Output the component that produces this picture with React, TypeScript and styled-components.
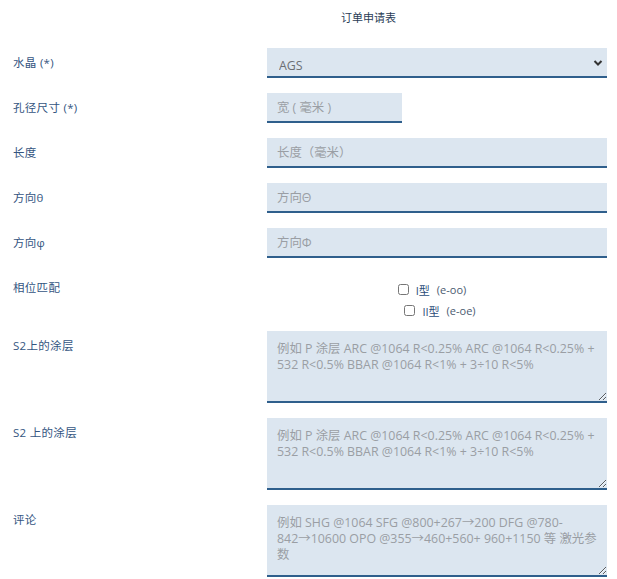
import styled, { createGlobalStyle } from 'styled-components'

const GlobalStyle = createGlobalStyle`
  html, body {
    margin: 0;
    padding: 0;
    background: #ffffff;
  }
  body {
    font-family: 'Open Sans', 'Noto Sans CJK SC', sans-serif;
  }
`

const Page = styled.div`
  width: 617px;
  padding: 10px 0 0 13px;
  box-sizing: border-box;
`

const Title = styled.h3`
  margin: 0 0 22px;
  padding-left: 328px;
  font-size: 11px;
  line-height: 16px;
  font-weight: 400;
  color: #2b3d57;
`

const Form = styled.form`
  display: grid;
  grid-template-columns: 254px 340px;
  row-gap: 15px;
  align-items: start;
`

const Label = styled.label`
  padding-top: 7px;
  font-size: 11.5px;
  line-height: 16px;
  letter-spacing: 0.3px;
  color: #34557f;
`

const fieldBase = `
  box-sizing: border-box;
  height: 30px;
  border: none;
  border-bottom: 2px solid #2f5f8c;
  background: #dce6f0;
  font-family: 'Open Sans', 'Noto Sans CJK SC', sans-serif;
  font-size: 12.4px;
  color: #555;
  padding: 0 10px;
  outline: none;
  &::placeholder {
    color: #9a9ea4;
  }
`

const TextInput = styled.input<{ $narrow?: boolean }>`
  ${fieldBase}
  width: ${(p) => (p.$narrow ? '135px' : '340px')};
`

const SelectWrap = styled.div`
  position: relative;
  width: 340px;
`

const Select = styled.select`
  ${fieldBase}
  width: 100%;
  appearance: none;
  padding: 8px 12px 0;
  line-height: 16px;
  color: #6b6f74;
`

const Chevron = styled.svg`
  position: absolute;
  right: 4px;
  top: 11px;
  width: 10px;
  height: 8px;
  pointer-events: none;
`

const TextArea = styled.textarea`
  ${fieldBase}
  width: 340px;
  height: 72px;
  padding: 10px 8px 10px 10px;
  line-height: 16px;
  resize: vertical;
  display: block;
`

const PhaseBox = styled.div`
  height: 43px;
  padding-top: 6px;
  box-sizing: border-box;
  display: flex;
  flex-direction: column;
  align-items: center;
`

const CheckRow = styled.label<{ $shift: number }>`
  display: flex;
  align-items: center;
  flex: none;
  height: 21px;
  margin-left: ${(p) => p.$shift}px;
  font-size: 11px;
  color: #2a4c78;
  input {
    width: 11px;
    height: 11px;
    margin: 0 7px 0 0;
  }
`

const Code = styled.span`
  margin-left: 7px;
  color: #4a5a70;
`

const coatingHint =
  '例如 P 涂层 ARC @1064 R<0.25% ARC @1064 R<0.25% + 532 R<0.5% BBAR @1064 R<1% + 3÷10 R<5%'

const App = () => {
  return (
    <Page>
      <GlobalStyle />
      <Title>订单申请表</Title>
      <Form>
        <Label>水晶 (*)</Label>
        <SelectWrap>
          <Select defaultValue="AGS">
            <option>AGS</option>
            <option>BBO</option>
            <option>LBO</option>
            <option>KTP</option>
          </Select>
          <Chevron viewBox="0 0 10 8">
            <path d="M1.5 2 L5 5.5 L8.5 2" fill="none" stroke="#333" strokeWidth="2" />
          </Chevron>
        </SelectWrap>

        <Label>孔径尺寸 (*)</Label>
        <TextInput $narrow placeholder="宽 ( 毫米 )" />

        <Label>长度</Label>
        <TextInput placeholder="长度（毫米）" />

        <Label>方向θ</Label>
        <TextInput placeholder="方向Θ" />

        <Label>方向φ</Label>
        <TextInput placeholder="方向Φ" />

        <Label>相位匹配</Label>
        <PhaseBox>
          <CheckRow $shift={-10}>
            <input type="checkbox" />
            I型<Code>(e-oo)</Code>
          </CheckRow>
          <CheckRow $shift={6}>
            <input type="checkbox" />
            II型<Code>(e-oe)</Code>
          </CheckRow>
        </PhaseBox>

        <Label>S2上的涂层</Label>
        <TextArea placeholder={coatingHint} />

        <Label>S2 上的涂层</Label>
        <TextArea placeholder={coatingHint} />

        <Label>评论</Label>
        <TextArea placeholder="例如 SHG @1064 SFG @800+267→200 DFG @780-842→10600 OPO @355→460+560+ 960+1150 等 激光参数" />
      </Form>
    </Page>
  )
}

export default App
